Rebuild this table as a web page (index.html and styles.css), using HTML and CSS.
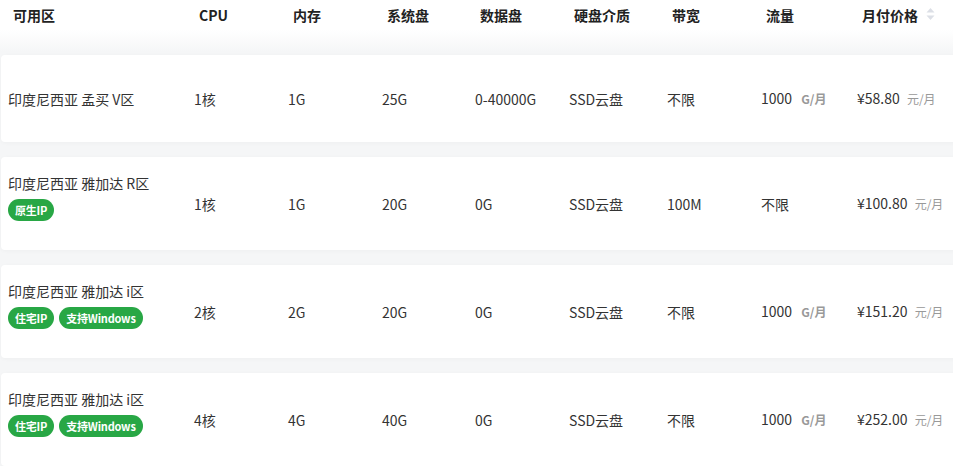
FILE: index.html
```html
<!DOCTYPE html>
<html lang="zh-CN">
<head>
    <meta charset="UTF-8">
    <meta name="viewport" content="width=device-width, initial-scale=1.0">
    <title>实例价格</title>
    <link rel="stylesheet" href="styles.css">
</head>
<body>
    <div class="price-table">
        <div class="head-row">
            <div>可用区</div>
            <div>CPU</div>
            <div>内存</div>
            <div>系统盘</div>
            <div>数据盘</div>
            <div>硬盘介质</div>
            <div>带宽</div>
            <div>流量</div>
            <div class="sortable">
                月付价格
                <svg class="sort-icon" width="9" height="14" viewBox="0 0 9 14">
                    <path d="M4.5 1 L8.5 5.5 L0.5 5.5 Z" fill="#dcdfe6"/>
                    <path d="M4.5 13 L8.5 8.5 L0.5 8.5 Z" fill="#dcdfe6"/>
                </svg>
            </div>
        </div>

        <div class="list">
            <div class="row">
                <div class="zone">
                    <div class="name">印度尼西亚 孟买 V区</div>
                </div>
                <div>1核</div>
                <div>1G</div>
                <div>25G</div>
                <div>0-40000G</div>
                <div>SSD云盘</div>
                <div>不限</div>
                <div>1000 <span class="unit bold">G/月</span></div>
                <div>¥58.80 <span class="unit">元/月</span></div>
            </div>

            <div class="row">
                <div class="zone">
                    <div class="name">印度尼西亚 雅加达 R区</div>
                    <div class="tags">
                        <span class="tag">原生IP</span>
                    </div>
                </div>
                <div>1核</div>
                <div>1G</div>
                <div>20G</div>
                <div>0G</div>
                <div>SSD云盘</div>
                <div>100M</div>
                <div>不限</div>
                <div>¥100.80 <span class="unit">元/月</span></div>
            </div>

            <div class="row">
                <div class="zone">
                    <div class="name">印度尼西亚 雅加达 i区</div>
                    <div class="tags">
                        <span class="tag">住宅IP</span>
                        <span class="tag">支持Windows</span>
                    </div>
                </div>
                <div>2核</div>
                <div>2G</div>
                <div>20G</div>
                <div>0G</div>
                <div>SSD云盘</div>
                <div>不限</div>
                <div>1000 <span class="unit bold">G/月</span></div>
                <div>¥151.20 <span class="unit">元/月</span></div>
            </div>

            <div class="row">
                <div class="zone">
                    <div class="name">印度尼西亚 雅加达 i区</div>
                    <div class="tags">
                        <span class="tag">住宅IP</span>
                        <span class="tag">支持Windows</span>
                    </div>
                </div>
                <div>4核</div>
                <div>4G</div>
                <div>40G</div>
                <div>0G</div>
                <div>SSD云盘</div>
                <div>不限</div>
                <div>1000 <span class="unit bold">G/月</span></div>
                <div>¥252.00 <span class="unit">元/月</span></div>
            </div>
        </div>
    </div>
</body>
</html>
```

FILE: styles.css
```css
body {
    margin: 0;
    padding: 0;
    background-color: #fff;
    overflow: hidden;
}
.price-table {
    font-family: "Noto Sans CJK SC", "Open Sans", sans-serif;
    font-size: 14px;
    line-height: 20px;
    color: #333;
}
.head-row, .row {
    display: grid;
    grid-template-columns: 186px 94px 94px 93px 94px 98px 94px 96px 1fr;
    align-items: center;
}
.head-row {
    height: 30px;
    padding-left: 13px;
    font-weight: bold;
    color: #222;
}
.head-row div:first-child {
    margin-left: -6px;
    padding-left: 6px;
}
.head-row div + div {
    margin-left: 0;
}
.head-row .sortable {
    display: flex;
    align-items: center;
    gap: 8px;
}
.sort-icon {
    margin-top: -2px;
}
.list {
    background: linear-gradient(#fff 0, #f5f6f7 22px);
    padding: 25px 0 0 1px;
    display: flex;
    flex-direction: column;
    gap: 15px;
}
.row {
    width: 980px;
    min-height: 87px;
    box-sizing: border-box;
    padding: 16px 0 16px 7px;
    background-color: #fff;
    border-radius: 4px;
    box-shadow: 0 1px 4px rgba(0,0,0,0.03);
}
.row .name {
    white-space: nowrap;
}
.tags {
    display: flex;
    gap: 5px;
    margin-top: 6px;
    margin-bottom: 13px;
}
.tag {
    display: inline-block;
    height: 22px;
    line-height: 22px;
    padding: 0 7px;
    border-radius: 11px;
    background-color: #28a745;
    color: #fff;
    font-size: 11px;
    font-weight: bold;
    letter-spacing: -0.2px;
}
.unit {
    font-size: 12px;
    color: #999;
    margin-left: 4px;
}
.unit.bold {
    font-weight: bold;
    margin-left: 6px;
}
```
